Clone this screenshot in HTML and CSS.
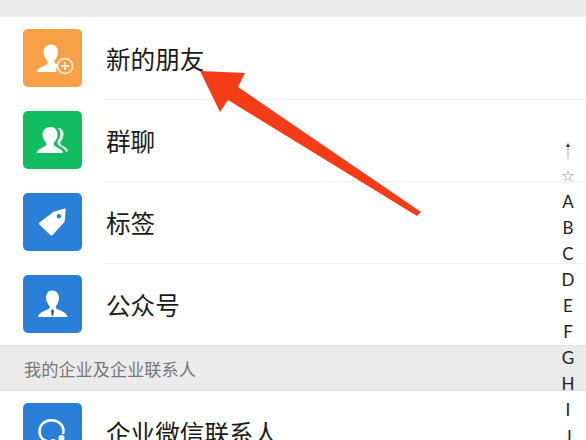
FILE: index.html
```html
<!DOCTYPE html>
<html lang="zh-CN">
<head>
    <meta charset="UTF-8">
    <title>通讯录</title>
    <link rel="stylesheet" href="styles.css">
</head>
<body>
    <div class="screen">
        <div class="top-band"></div>

        <div class="row">
            <div class="icon orange">
                <svg viewBox="0 0 59 58" width="59" height="58">
                    <path fill="#fff" d="M28 15.500c4.500 0 7 3.500 7 7.500 0 3.500-1.500 6.500-3.500 8.500-.5 1.500 0 2.500 1.500 3.300l2 1c-1.500 2-2 4.500-1.500 7.200H15c-1.500 0-1.500-1-.5-2 2-2.500 6-3.500 9-5.500 1.500-1 1.500-2.500.5-4-2-2-3.500-5-3.500-8.500 0-4 3-7.500 7.500-7.500z"/>
                    <circle cx="42" cy="37" r="7.500" fill="#f8a046" stroke="#fde9cf" stroke-width="1.800"/>
                    <path stroke="#fde9cf" stroke-width="2" d="M38 37h8M42 33v8"/>
                </svg>
            </div>
            <div class="row-body">新的朋友</div>
        </div>

        <div class="row">
            <div class="icon green">
                <svg viewBox="0 0 59 58" width="59" height="58">
                    <path fill="#d9f4e4" d="M35 17c3.500-.5 6 3 5.500 7-.3 3-1.500 5-3 7-.5 2 .5 3 2 3.800 2 1 4.500 2 5.500 5.200-.3.800-1 1.200-2 .8-1.500-3-4-4.300-6-5.300-2-1-3-2.500-2.500-5.500 1.500-2 2.500-4 2.700-6.500.2-3-.8-5-2.700-6.500z"/>
                    <path fill="#fff" d="M28 16c4 0 6.500 3.500 6.500 7.500 0 3.500-1.500 6-3.500 8-.7 2 0 3 1.500 4 2.500 1.500 6 2.500 7.500 5.500 0 .7-.5 1-1 1H14.500c-.8 0-1-.5-.7-1 1.700-3 5-4 7.700-5.500 1.500-1 2.200-2 1.500-4-2-2-3.500-4.500-3.500-8 0-4 3-7.500 8.500-7.500z"/>
                </svg>
            </div>
            <div class="row-body">群聊</div>
        </div>

        <div class="row">
            <div class="icon blue">
                <svg viewBox="0 0 59 58" width="59" height="58">
                    <path fill="#fff" fill-rule="evenodd" d="M16.500 29.500L30 19.200c.5-.4 1-.6 1.500-.7l10-3c.8-.2 1.300.3 1.200 1l-1 11.500c0 .6-.3 1-.7 1.500L29.500 42c-.7.8-1.500.8-2.200 0L16.300 31.500c-.6-.6-.5-1.500.2-2zM33.700 23.300a2.200 2.200 0 1 0 4.400 0 2.200 2.200 0 1 0-4.400 0z"/>
                </svg>
            </div>
            <div class="row-body">标签</div>
        </div>

        <div class="row">
            <div class="icon blue">
                <svg viewBox="0 0 59 58" width="59" height="58">
                    <path fill="#fff" d="M29 15.500c4.500 0 7 3.500 7 7.500 0 3.500-1.500 6-3 8-.5 1.500 0 2.500 1.500 3.300 3 1.500 8 2.700 10 7 .2.500 0 .7-.5.700H15.500c-.5 0-.7-.2-.5-.7 2-4.300 7-5.500 10-7 1.500-.8 2-1.800 1.500-3.300-1.500-2-3.500-4.500-3.500-8 0-4 2-7.500 6-7.500z"/>
                    <path fill="#1f4f80" d="M28.700 34.500h1.600l.5 1.500-.5 4.500h-1.600l-.5-4.500z"/>
                </svg>
            </div>
            <div class="row-body">公众号</div>
        </div>

        <div class="section">我的企业及企业联系人</div>

        <div class="row">
            <div class="icon blue">
                <svg viewBox="0 0 59 58" width="59" height="58">
                    <path fill="none" stroke="#fff" stroke-width="2.500" d="M24 38c-5-1-7.500-5-7.500-10 0-6 5-10.800 12-10.800s12 4.800 12 10.800c0 1-.2 2-.5 3"/>
                    <circle cx="38.500" cy="35" r="3" fill="#fff"/>
                    <circle cx="30" cy="39" r="3" fill="#fff"/>
                </svg>
            </div>
            <div class="row-body">企业微信联系人</div>
        </div>

        <svg class="arrow" viewBox="0 0 586 440" width="586" height="440">
            <path fill="#f43c17" d="M200 71L245 73 238 87 421 212 417 216 228 100 220 112z"/>
        </svg>

        <ul class="index">
            <li>
                <svg viewBox="0 0 10 18" width="10" height="18">
                    <path stroke="#aaa" stroke-width="1" d="M5 4v13"/>
                    <path fill="#333" d="M5 1l2 4H3z"/>
                </svg>
            </li>
            <li class="star">☆</li>
            <li>A</li>
            <li>B</li>
            <li>C</li>
            <li>D</li>
            <li>E</li>
            <li>F</li>
            <li>G</li>
            <li>H</li>
            <li>I</li>
            <li>J</li>
        </ul>
    </div>
</body>
</html>
```

FILE: styles.css
```css
html, body { margin: 0; padding: 0; }
body { background: #fff; font-family: "Noto Sans CJK SC", "Liberation Sans", sans-serif; color: #1a1a1a; }
.screen { width: 586px; height: 440px; position: relative; overflow: hidden; }
.top-band { height: 17px; background: #ebebeb; }
.row { height: 82px; display: flex; align-items: center; padding-left: 23px; }
.row + .row .row-body { border-top: 1px solid #f2f2f2; padding-bottom: 1px; }
.icon { width: 59px; height: 58px; border-radius: 5px; flex-shrink: 0; }
.icon svg { display: block; }
.orange { background: #f8a046; }
.green { background: #12bc60; }
.blue { background: #2a80d8; }
.row-body { flex: 1; height: 82px; box-sizing: border-box; margin-left: 22px; padding-left: 2px; display: flex; align-items: center; font-size: 24.6px; }
.section { height: 46px; background: #ebebeb; border-top: 1px solid #e2e2e2; border-bottom: 1px solid #e2e2e2; box-sizing: border-box; display: flex; align-items: center; padding-left: 24px; font-size: 17.2px; color: #777; }
.arrow { position: absolute; top: 0; left: 0; }
.index { position: absolute; top: 136.500px; right: 0; width: 36px; margin: 0; padding: 0; list-style: none; font-family: Lato, sans-serif; font-size: 17px; text-align: center; color: #222; }
.index li { height: 26.100px; line-height: 26.100px; }
.index svg { vertical-align: middle; }
.index .star { font-family: "DejaVu Sans", sans-serif; font-size: 15px; color: #8a8a8a; }
```
